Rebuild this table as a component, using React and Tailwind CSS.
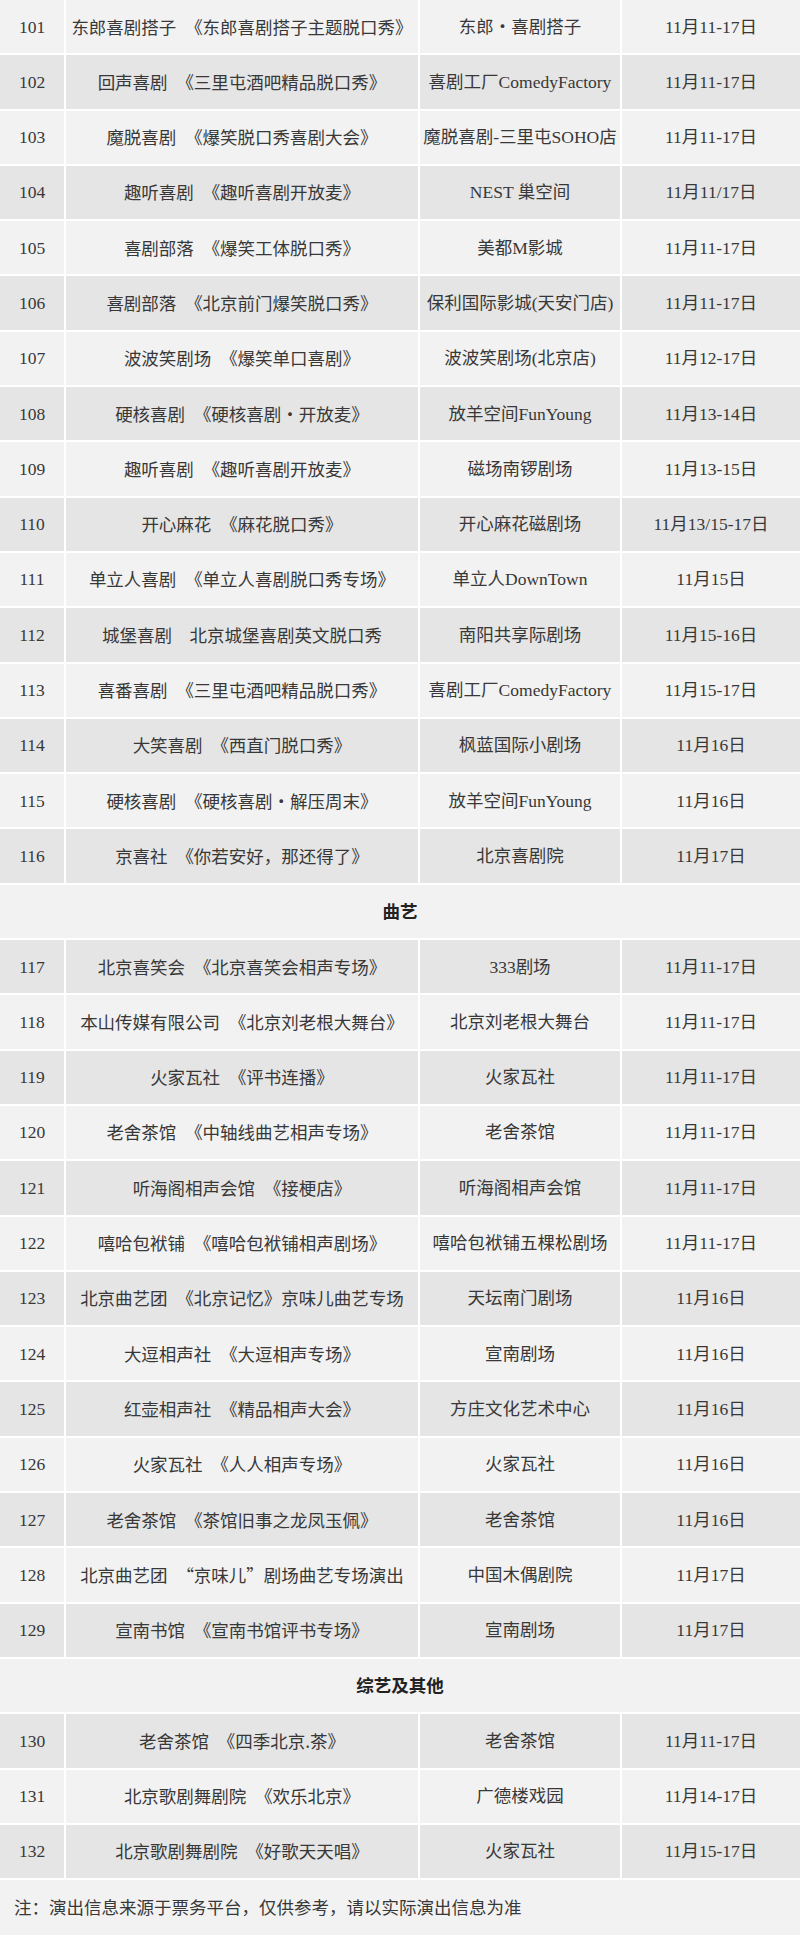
import React from 'react';

// rows: [no, org, title, venue, date]
const comedy = [
  ['101', '东郎喜剧搭子', '《东郎喜剧搭子主题脱口秀》', '东郎・喜剧搭子', '11月11-17日'],
  ['102', '回声喜剧', '《三里屯酒吧精品脱口秀》', '喜剧工厂ComedyFactory', '11月11-17日'],
  ['103', '魔脱喜剧', '《爆笑脱口秀喜剧大会》', '魔脱喜剧-三里屯SOHO店', '11月11-17日'],
  ['104', '趣听喜剧', '《趣听喜剧开放麦》', 'NEST 巢空间', '11月11/17日'],
  ['105', '喜剧部落', '《爆笑工体脱口秀》', '美都M影城', '11月11-17日'],
  ['106', '喜剧部落', '《北京前门爆笑脱口秀》', '保利国际影城(天安门店)', '11月11-17日'],
  ['107', '波波笑剧场', '《爆笑单口喜剧》', '波波笑剧场(北京店)', '11月12-17日'],
  ['108', '硬核喜剧', '《硬核喜剧・开放麦》', '放羊空间FunYoung', '11月13-14日'],
  ['109', '趣听喜剧', '《趣听喜剧开放麦》', '磁场南锣剧场', '11月13-15日'],
  ['110', '开心麻花', '《麻花脱口秀》', '开心麻花磁剧场', '11月13/15-17日'],
  ['111', '单立人喜剧', '《单立人喜剧脱口秀专场》', '单立人DownTown', '11月15日'],
  ['112', '城堡喜剧', '北京城堡喜剧英文脱口秀', '南阳共享际剧场', '11月15-16日'],
  ['113', '喜番喜剧', '《三里屯酒吧精品脱口秀》', '喜剧工厂ComedyFactory', '11月15-17日'],
  ['114', '大笑喜剧', '《西直门脱口秀》', '枫蓝国际小剧场', '11月16日'],
  ['115', '硬核喜剧', '《硬核喜剧・解压周末》', '放羊空间FunYoung', '11月16日'],
  ['116', '京喜社', '《你若安好，那还得了》', '北京喜剧院', '11月17日'],
];

const quyi = [
  ['117', '北京喜笑会', '《北京喜笑会相声专场》', '333剧场', '11月11-17日'],
  ['118', '本山传媒有限公司', '《北京刘老根大舞台》', '北京刘老根大舞台', '11月11-17日'],
  ['119', '火家瓦社', '《评书连播》', '火家瓦社', '11月11-17日'],
  ['120', '老舍茶馆', '《中轴线曲艺相声专场》', '老舍茶馆', '11月11-17日'],
  ['121', '听海阁相声会馆', '《接梗店》', '听海阁相声会馆', '11月11-17日'],
  ['122', '嘻哈包袱铺', '《嘻哈包袱铺相声剧场》', '嘻哈包袱铺五棵松剧场', '11月11-17日'],
  ['123', '北京曲艺团', '《北京记忆》京味儿曲艺专场', '天坛南门剧场', '11月16日'],
  ['124', '大逗相声社', '《大逗相声专场》', '宣南剧场', '11月16日'],
  ['125', '红壶相声社', '《精品相声大会》', '方庄文化艺术中心', '11月16日'],
  ['126', '火家瓦社', '《人人相声专场》', '火家瓦社', '11月16日'],
  ['127', '老舍茶馆', '《茶馆旧事之龙凤玉佩》', '老舍茶馆', '11月16日'],
  ['128', '北京曲艺团', '“京味儿”剧场曲艺专场演出', '中国木偶剧院', '11月17日'],
  ['129', '宣南书馆', '《宣南书馆评书专场》', '宣南剧场', '11月17日'],
];

const other = [
  ['130', '老舍茶馆', '《四季北京.茶》', '老舍茶馆', '11月11-17日'],
  ['131', '北京歌剧舞剧院', '《欢乐北京》', '广德楼戏园', '11月14-17日'],
  ['132', '北京歌剧舞剧院', '《好歌天天唱》', '火家瓦社', '11月15-17日'],
];

function Row({ row, dark }) {
  const [no, org, title, venue, date] = row;
  const bg = dark ? 'bg-[#e5e5e5]' : 'bg-[#f2f2f2]';
  return (
    <div className="grid grid-cols-[64px_352px_200px_178px] gap-x-[2px] h-[53.3px] shrink-0 text-[17.5px] text-[#383838] font-['Liberation_Serif','Noto_Sans_CJK_SC',serif]">
      <div className={`${bg} flex items-center justify-center`}>{no}</div>
      <div className={`${bg} flex items-center justify-center whitespace-nowrap overflow-hidden font-['Noto_Sans_CJK_SC',sans-serif]`}>
        {org}{'\u3000'}{title}
      </div>
      <div className={`${bg} flex items-center justify-center whitespace-nowrap overflow-hidden`}>{venue}</div>
      <div className={`${bg} flex items-center justify-center whitespace-nowrap`}>{date}</div>
    </div>
  );
}

function Section({ title }) {
  return (
    <div className="h-[53.3px] shrink-0 bg-[#f2f2f2] flex items-center justify-center text-[17.5px] font-bold text-[#222] font-['Noto_Sans_CJK_SC',sans-serif]">
      {title}
    </div>
  );
}

export default function App() {
  return (
    <div className="w-[800px] h-[1935px] bg-white flex flex-col gap-[2px] overflow-hidden">
      {comedy.map((r, i) => <Row key={r[0]} row={r} dark={i % 2 === 1} />)}
      <Section title="曲艺" />
      {quyi.map((r, i) => <Row key={r[0]} row={r} dark={i % 2 === 0} />)}
      <Section title="综艺及其他" />
      {other.map((r, i) => <Row key={r[0]} row={r} dark={i % 2 === 0} />)}
      <div className="flex-1 bg-[#f2f2f2] flex items-center pl-[14px] text-[17.5px] text-[#383838] font-['Noto_Sans_CJK_SC',sans-serif]">
        注：演出信息来源于票务平台，仅供参考，请以实际演出信息为准
      </div>
    </div>
  );
}
